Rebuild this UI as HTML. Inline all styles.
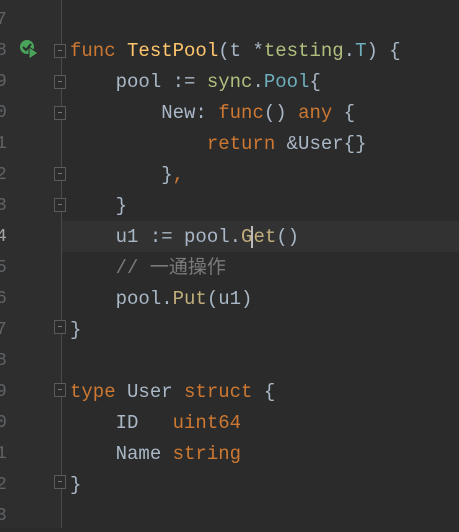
<!DOCTYPE html>
<html><head><meta charset="utf-8"><style>
html,body{margin:0;padding:0;}
body{width:459px;height:528px;background:#2b2b2b;position:relative;overflow:hidden;font-family:"Liberation Mono","Noto Sans CJK SC",monospace;font-size:19px;letter-spacing:0;}
.gut{position:absolute;left:0;top:0;width:61px;height:528px;background:#2e2e2e;}
.sep{position:absolute;left:61px;top:0;width:1px;height:528px;background:#4a4a4a;}
.ln{position:absolute;left:-4px;color:#606366;font-size:18px;line-height:31px;margin-top:2px;}
.l{position:absolute;left:70px;white-space:pre;line-height:31px;color:#a9b7c6;margin-top:2px;}
.hl{position:absolute;left:62px;width:397px;height:31px;background:#323232;}
.k{color:#cc7832}.f{color:#ffc66d}.p{color:#afbf7e}.t{color:#6fafbd}.c{color:#7a7a7a}.m{color:#c0ae7c}
.fold{position:absolute;left:54px;width:12px;height:14px;border:1px solid #5a5a5a;box-sizing:border-box;background:#2b2b2b;}
.fold:after{content:"";position:absolute;left:3px;top:5px;width:4px;height:1px;background:#777;}
</style></head><body>
<div class="gut"></div>
<div class="hl" style="top:221px"></div>
<div class="sep"></div>
<div class="ln" style="top:3px">7</div>
<div class="ln" style="top:34px">8</div>
<div class="ln" style="top:65px">9</div>
<div class="ln" style="top:96px">0</div>
<div class="ln" style="top:127px">1</div>
<div class="ln" style="top:158px">2</div>
<div class="ln" style="top:189px">3</div>
<div class="ln" style="top:220px;color:#a4a3a3">4</div>
<div class="ln" style="top:251px">5</div>
<div class="ln" style="top:282px">6</div>
<div class="ln" style="top:313px">7</div>
<div class="ln" style="top:344px">8</div>
<div class="ln" style="top:375px">9</div>
<div class="ln" style="top:406px">0</div>
<div class="ln" style="top:437px">1</div>
<div class="ln" style="top:468px">2</div>
<div class="ln" style="top:499px">3</div>
<svg style="position:absolute;left:18px;top:38px" width="22" height="22" viewBox="0 0 22 22"><circle cx="9" cy="9" r="7" fill="#4aa35b"/><path d="M5 9l3 3 5-6" stroke="#2b2b2b" stroke-width="2" fill="none"/><path d="M11 9l9 6-9 6z" fill="#4aa35b" stroke="#2b2b2b" stroke-width="1"/></svg>
<div class="fold" style="top:44px"></div>
<div class="fold" style="top:75px"></div>
<div class="fold" style="top:106px"></div>
<div class="fold" style="top:167px"></div>
<div class="fold" style="top:198px"></div>
<div class="fold" style="top:320px"></div>
<div class="fold" style="top:383px"></div>
<div class="fold" style="top:475px"></div>
<div class="l" style="top:34px"><span class="k">func</span> <span class="f">TestPool</span>(t *<span class="p">testing</span>.<span class="t">T</span>) {</div>
<div class="l" style="top:65px">    pool := <span class="p">sync</span>.<span class="t">Pool</span>{</div>
<div class="l" style="top:96px">        New: <span class="k">func</span>() <span class="k">any</span> {</div>
<div class="l" style="top:127px">            <span class="k">return</span> &amp;User{}</div>
<div class="l" style="top:158px">        }<span class="k">,</span></div>
<div class="l" style="top:189px">    }</div>
<div class="l" style="top:220px">    u1 := pool.<span class="m">G<span style="border-left:2px solid #bbb;margin-left:-1px">e</span>t</span>()</div>
<div class="l" style="top:251px"><span class="c">    // 一通操作</span></div>
<div class="l" style="top:282px">    pool.<span class="m">Put</span>(u1)</div>
<div class="l" style="top:313px">}</div>
<div class="l" style="top:375px"><span class="k">type</span> User <span class="k">struct</span> {</div>
<div class="l" style="top:406px">    ID   <span class="k">uint64</span></div>
<div class="l" style="top:437px">    Name <span class="k">string</span></div>
<div class="l" style="top:468px">}</div>
</body></html>
